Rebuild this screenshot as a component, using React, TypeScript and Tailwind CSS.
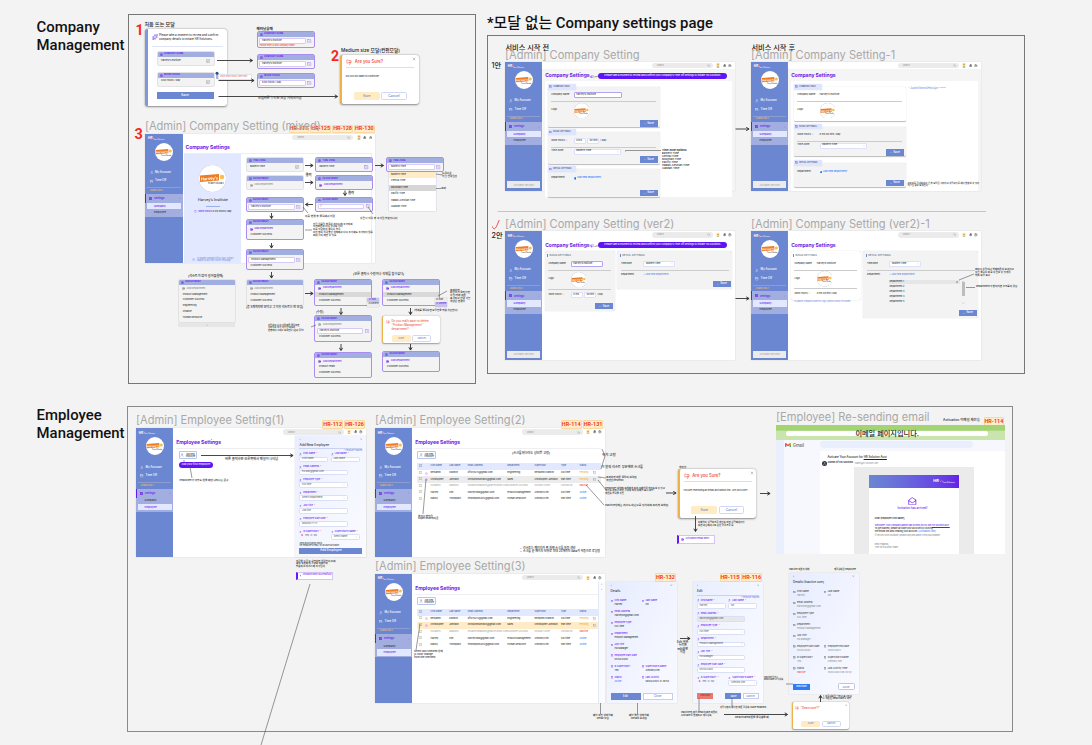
import React from "react";
import { User, Calendar, LayoutGrid, Search, Bell, Settings, Sparkles, Megaphone, X, ChevronDown, ChevronUp, Mail, MailOpen, Building2, SquareCheck, SquarePen, CirclePlus, Briefcase, Info, Check } from "lucide-react";

type Kids = { children?: React.ReactNode };

/* ---------- canvas primitives ---------- */

function Node({ at, children }: Kids & { at: string }) {
  return <div className={"absolute " + at}>{children}</div>;
}

function Note({ at, children }: Kids & { at: string }) {
  return <div className={"absolute whitespace-pre leading-[1.15] text-[#1d1d1d] " + at}>{children}</div>;
}

function ArtLabel({ at, children }: Kids & { at: string }) {
  return (
    <div className={"absolute whitespace-nowrap text-[11.1px] font-normal leading-[14px] text-[#a8a8a8] " + at}>
      {children}
    </div>
  );
}

function Chips({ at, ids }: { at: string; ids: string[] }) {
  return (
    <div className={"absolute flex gap-px whitespace-nowrap " + at}>
      {ids.map((id) => (
        <span
          key={id}
          className="flex h-[8.5px] w-[20.8px] items-center justify-center rounded-[1px] border border-[#f8d9a0] bg-[#ffecca] font-['Roboto',sans-serif] text-[5.4px] font-bold leading-none text-[#f03a26]"
        >
          {id}
        </span>
      ))}
    </div>
  );
}

/* ---------- shared pieces ---------- */

function Brand({ size }: { size: string }) {
  return (
    <svg viewBox="0 0 54 54" className={"shrink-0 " + size}>
      <circle cx="27" cy="27" r="27" fill="#fff" />
      <path d="M2 21 L40 18 L40 31 L2 34 Z" fill="#ee7c22" />
      <text x="4" y="31" fontSize="8" fontWeight="700" fill="#fff" transform="rotate(-4 4 31)" fontFamily="Inter">
        Harvey’s
      </text>
      <circle cx="46" cy="24" r="4.5" fill="#f8bd4a" />
      <text x="18" y="37.5" fontSize="5" fill="#444" fontFamily="Inter">
        Travel Studio
      </text>
    </svg>
  );
}

function Sidebar({ page, activate }: { page: "company" | "employee"; activate?: boolean }) {
  return (
    <div className="flex w-[37.4px] shrink-0 flex-col bg-[#6b87d1] text-white">
      <div className="flex h-[9px] items-start pl-[2.8px] pt-[3.4px] text-[3.2px] font-bold leading-none">
        HR<span className="text-[#ff5a4a]">⁄</span>
        <span className="pt-[1.6px] text-[1.6px] font-normal">Time Solutions</span>
      </div>
      <div className="flex h-[18px] justify-center">
        <Brand size="h-[18px] w-[18px]" />
      </div>
      <div className="flex h-[13.8px] items-end gap-[1.8px] pl-[4.4px] text-[2.8px] leading-[3.6px]">
        <User className="h-[3.4px] w-[3.4px]" /> My Account
      </div>
      <div className="flex h-[8.6px] items-end gap-[1.8px] pl-[4.4px] text-[2.8px] leading-[3.6px]">
        <Calendar className="h-[3.4px] w-[3.4px]" /> Time Off
      </div>
      <div className="mx-[2px] mt-[4.4px] h-[0.5px] bg-[#8d9dd0]" />
      <div className="h-[6px] pl-[4.6px] pt-[2.2px] text-[2.1px] leading-none text-[#f0bd58]">ADMIN ONLY</div>
      <div className="flex h-[23px] flex-col bg-[#a3aee0] text-[2.6px] leading-none text-[#333]">
        <div className="flex h-[9px] items-center gap-[1.8px] border-l-[1.5px] border-[#6a16f5] pl-[3px] font-semibold text-[#6a16f5]">
          <LayoutGrid className="h-[3px] w-[3px]" fill="#6a16f5" /> Settings
          <ChevronUp className="ml-auto mr-[2px] h-[2px] w-[2px]" />
        </div>
        <div
          className={
            page === "company"
              ? "mx-[1.6px] flex h-[6.2px] items-center bg-[#e1e8ff] pl-[7px] text-[#6a16f5]"
              : "mx-[1.6px] flex h-[6.2px] items-center pl-[7px]"
          }
        >
          Company
        </div>
        <div
          className={
            page === "employee"
              ? "mx-[1.6px] flex h-[6.2px] items-center bg-[#e1e8ff] pl-[7px] text-[#6a16f5]"
              : "mx-[1.6px] flex h-[6.2px] items-center pl-[7px]"
          }
        >
          Employee
        </div>
      </div>
      {activate && (
        <div className="mx-[2px] mb-[2.6px] mt-auto flex h-[6.8px] items-center justify-center bg-[#ebebeb] text-[2.6px] leading-none text-[#a5a5a5]">
          Activate Service
        </div>
      )}
    </div>
  );
}

function Screen({
  at,
  page,
  title,
  activate,
  tint,
  children,
}: Kids & { at: string; page: "company" | "employee"; title: string; activate?: boolean; tint?: boolean }) {
  return (
    <div className={"absolute flex h-[129px] w-[229.6px] shadow-[0_0_1px_#c4c4c4] " + at}>
      <Sidebar page={page} activate={activate} />
      <div className={"flex min-w-0 grow flex-col " + (tint ? "bg-[#f5f5f6]" : "bg-white")}>
        <div className="flex h-[7.6px] shrink-0 items-center justify-end bg-white pr-[2.6px] shadow-[0_0.3px_0.6px_#ddd]">
          <div className="flex h-[5.4px] w-[61px] items-center justify-between rounded-full bg-[#ebebeb] pl-[5px] pr-[3px] text-[2.1px] text-[#999]">
            Search <Search className="h-[3px] w-[3px]" />
          </div>
          <svg viewBox="0 0 8 10" className="ml-[3.6px] h-[4.6px] w-[4px]">
            <rect width="8" height="10" fill="#ffeccb" />
            <circle cx="4" cy="3.5" r="2.4" fill="#f0a93c" />
            <path d="M1 10 Q4 4.5 7 10Z" fill="#4aa8a0" />
          </svg>
          <Bell className="ml-[2.4px] h-[3.4px] w-[3.4px] text-[#555]" fill="#777" />
          <Settings className="ml-[2.2px] h-[3.6px] w-[3.6px] text-[#333]" />
        </div>
        <div className="h-[11.6px] shrink-0 whitespace-nowrap pl-[2.8px] pt-[4px] text-[5px] font-bold leading-[5.4px] tracking-[-0.03px] text-[#6a16e8]">
          {title}
        </div>
        {children}
      </div>
    </div>
  );
}

type Row = { text: string; kind?: "add" | "addGray" | "input" | "mark" | "plain" | "edit" };

function FieldCard({ at, label, rows, active }: { at: string; label: string; rows: Row[]; active?: boolean }) {
  return (
    <div
      className={
        "flex w-[58px] flex-col overflow-hidden rounded-[2px] border bg-[#f3f3f4] text-[2.4px] leading-none text-[#333] " +
        (active ? "border-[#a98df0] " : "border-[#e2e2e6] ") +
        at
      }
    >
      <div className="flex h-[5.2px] shrink-0 items-center gap-[1.4px] bg-[#a3aee0] pl-[2.4px] text-[2.3px] font-semibold text-[#6a16f5]">
        <Building2 className="h-[2.8px] w-[2.8px]" /> {label}
      </div>
      <div className="flex grow flex-col justify-around py-[0.8px]">
        {rows.map((r, i) => {
          if (r.kind === "input")
            return (
              <div key={i} className="flex items-center gap-[1.6px] px-[1.8px]">
                <span className="flex h-[5.8px] grow items-center rounded-[1px] border border-[#d6cbf7] bg-white pl-[1.6px]">
                  {r.text}
                </span>
                <SquareCheck className="h-[4.4px] w-[4.4px] text-[#8a5cf0]" />
              </div>
            );
          if (r.kind === "edit")
            return (
              <div key={i} className="flex items-center justify-between px-[3.4px]">
                {r.text}
                {active ? (
                  <SquareCheck className="h-[4.4px] w-[4.4px] text-[#7a3cf0]" />
                ) : (
                  <SquarePen className="h-[4px] w-[4px] text-[#777]" />
                )}
              </div>
            );
          if (r.kind === "add" || r.kind === "addGray")
            return (
              <div
                key={i}
                className={
                  "flex items-center gap-[1.8px] px-[3px] " + (r.kind === "add" ? "text-[#6a16f5]" : "text-[#888]")
                }
              >
                <CirclePlus className="h-[3px] w-[3px]" strokeWidth={4} /> {r.text}
              </div>
            );
          return (
            <div
              key={i}
              className={"flex items-center px-[4px] " + (r.kind === "mark" ? "h-[5px] bg-[#d9d9d9]" : "h-[3px]")}
            >
              {r.text}
            </div>
          );
        })}
      </div>
    </div>
  );
}

function Buttons({ small }: { small?: boolean }) {
  return (
    <div className={"mt-auto flex justify-center gap-[1.6px] " + (small ? "pb-[1.6px]" : "pb-[3.4px]")}>
      <span
        className={
          "flex items-center justify-center rounded-[1.6px] bg-[#ffebc4] leading-none text-[#7086bd] " +
          (small ? "h-[6.4px] w-[19px] text-[2.6px]" : "h-[7.8px] w-[25.6px] text-[3.4px]")
        }
      >
        Sure
      </span>
      <span
        className={
          "flex items-center justify-center rounded-[1.6px] border border-[#cfd8f4] bg-white leading-none text-[#6b87d1] " +
          (small ? "h-[6.4px] w-[19px] text-[2.6px]" : "h-[7.8px] w-[25.6px] text-[3.4px]")
        }
      >
        Cancel
      </span>
    </div>
  );
}

function ConfirmModal({ at, body }: { at: string; body: string }) {
  return (
    <div
      className={
        "absolute flex h-[48.6px] w-[78.6px] flex-col rounded-[3px] border-l-[2.4px] border-[#eeb24a] bg-white px-[4.4px] shadow-[0_0.6px_2px_#888] " +
        at
      }
    >
      <div className="flex h-[13.4px] shrink-0 items-center gap-[2.4px] border-b border-[#fbdda2] pt-[1.6px] text-[4.2px] font-semibold leading-none text-[#ee5b4c]">
        <Megaphone className="h-[6px] w-[6px] -scale-x-100" /> Are you Sure?
        <X className="-mr-[2px] -mt-[6px] ml-auto h-[4px] w-[4px] text-[#555]" />
      </div>
      <div className="-ml-[0.6px] whitespace-nowrap pt-[8px] text-[2.4px] leading-none text-[#333]">{body}</div>
      <Buttons />
    </div>
  );
}

/* ---------- company settings screens ---------- */

function SaveButton() {
  return (
    <span className="flex h-[6.6px] w-[18px] shrink-0 items-center justify-center gap-[1px] bg-[#6b87d1] text-[2.8px] leading-none text-white">
      <Check className="h-[2.6px] w-[2.6px]" /> Save
    </span>
  );
}

function Group({ size, label, children, white, save = true }: Kids & { size: string; label: string; white?: boolean; save?: boolean }) {
  return (
    <div
      className={
        "flex w-[112px] shrink-0 flex-col rounded-[1.6px] text-[2.4px] leading-none text-[#333] shadow-[0_0.3px_1px_#bbb] " +
        (white ? "bg-white " : "bg-[#f3f3f3] ") +
        size
      }
    >
      <div className="-mt-[2.6px] flex h-[5.4px] w-[28px] shrink-0 items-center gap-[1.2px] bg-[#dde5ff] pl-[1.8px] text-[2.1px] text-[#445] shadow-[0_0.2px_0.6px_#8ea2e0]">
        <Briefcase className="h-[2.8px] w-[2.8px] text-[#6a16f5]" /> {label}
      </div>
      {children}
      {save && (
        <div className="mt-auto flex justify-end pb-[1.2px] pr-[1.8px]">
          <SaveButton />
        </div>
      )}
    </div>
  );
}

function Input({ size, children }: Kids & { size: string }) {
  return (
    <span className={"flex h-[6px] items-center rounded-[1px] border border-[#dbe1f7] bg-white pl-[1.6px] " + size}>
      {children}
    </span>
  );
}

function LabelRow({ label, size, children }: Kids & { label: string; size: string }) {
  return (
    <div className={"flex shrink-0 items-center pl-[3.6px] " + size}>
      <span className="w-[22.4px] shrink-0">{label}</span>
      {children}
    </div>
  );
}

function CompanyOne({ at, after }: { at: string; after?: boolean }) {
  return (
    <Screen at={at} page="company" title="Company Settings" activate tint>
      <div className="ml-[2.4px] mr-[2.4px] flex grow flex-col rounded-[1px] bg-white pl-[2.8px] pt-[5.8px]">
        <Group size={after ? "h-[34px] mb-[5.8px]" : "h-[40.4px] mb-[4.8px]"} label="COMPANY INFO" white={after} save={!after}>
          <LabelRow label="Company Name" size="h-[11px]">
            {after ? <span>Harvey’s Institute</span> : <Input size="w-[48px] !border-[#b3a4f3]">Harvey’s Institute</Input>}
          </LabelRow>
          <div className="mx-[3.6px] h-[0.4px] shrink-0 bg-[#ccc]" />
          <LabelRow label="Logo" size="h-[19px]">
            <Brand size="h-[15.6px] w-[15.6px] drop-shadow-[0_0_0.5px_#999]" />
          </LabelRow>
        </Group>
        <Group size={after ? "h-[29px] mb-[7.2px]" : "h-[31.8px] mb-[5.2px]"} label="BASIC SETTINGS">
          <LabelRow label="Work Hours  ⓘ" size="h-[12px]">
            {after ? (
              <span>8 hrs 00 min / Day</span>
            ) : (
              <span className="flex items-center gap-[1.4px]">
                <Input size="w-[12px]">8 hrs</Input>
                <Input size="w-[12px]">00 min</Input>/ Day
              </span>
            )}
          </LabelRow>
          <div className="mx-[3.6px] h-[0.4px] shrink-0 bg-[#ccc]" />
          <LabelRow label="Time Zone" size={after ? "h-[7.6px]" : "h-[9px]"}>
            <Input size="w-[47.6px] justify-between pr-[1px]">
              Eastern Time <ChevronDown className="h-[2px] w-[2px]" />
            </Input>
          </LabelRow>
        </Group>
        <Group size={after ? "h-[24.6px]" : "h-[28.4px]"} label="DETAIL SETTINGS">
          <LabelRow label="Department" size="h-[12.8px]">
            <span className="flex items-center gap-[0.6px] text-[#1f78ff]">
              <CirclePlus className="h-[2.8px] w-[2.8px]" fill="#1f78ff" />
              Add new department
            </span>
          </LabelRow>
        </Group>
      </div>
    </Screen>
  );
}

function PanelHead({ children }: Kids) {
  return (
    <div className="flex h-[8px] shrink-0 items-center gap-[1.4px] pl-[2.6px] text-[2.6px] leading-none text-[#666]">
      <span className="h-[3.2px] w-[0.8px] bg-[#6b87d1]" />
      {children}
    </div>
  );
}

function CompanyTwo({ at, after }: { at: string; after?: boolean }) {
  return (
    <Screen at={at} page="company" title="Company Settings" activate>
      <div className="flex items-start gap-[2.6px] pl-[2.4px] pt-[0.8px] text-[2.3px] leading-none text-[#333]">
        <div
          className={
            "flex w-[70px] flex-col rounded-[2px] shadow-[0_0_1px_#bbb] " +
            (after ? "h-[48.4px] bg-white" : "h-[59.6px] bg-[#f3f3f3]")
          }
        >
          <PanelHead>BASIC SETTINGS</PanelHead>
          <LabelRow label="Company Name" size="h-[10.4px]">
            {after ? <span>Harvey’s Institute</span> : <Input size="w-[32px] !border-[#b3a4f3]">Harvey’s Institute</Input>}
          </LabelRow>
          <div className="mx-[3.6px] h-[0.4px] shrink-0 bg-[#ccc]" />
          <LabelRow label="Logo" size={after ? "h-[17.6px]" : "h-[19px]"}>
            <Brand size="h-[15.6px] w-[15.6px] drop-shadow-[0_0_0.5px_#999]" />
          </LabelRow>
          <div className="mx-[3.6px] h-[0.4px] shrink-0 bg-[#ccc]" />
          <LabelRow label="Work Hours ⓘ" size="h-[12px]">
            {after ? (
              <span>8 hrs 00 min / Day</span>
            ) : (
              <span className="flex items-center gap-[1.2px]">
                <Input size="w-[12px]">8 hrs</Input>
                <Input size="w-[12px]">00 min</Input>/ Day
              </span>
            )}
          </LabelRow>
          {!after && (
            <div className="mt-auto flex justify-end pb-[1.4px] pr-[1.6px]">
              <SaveButton />
            </div>
          )}
        </div>
        <div
          className={
            "flex w-[115px] flex-col rounded-[2px] bg-[#f3f3f3] shadow-[0_0_1px_#bbb] " +
            (after ? "h-[66.6px]" : "h-[37.6px]")
          }
        >
          <PanelHead>DETAIL SETTINGS</PanelHead>
          <LabelRow label="Timezone" size="h-[10.4px]">
            <Input size="w-[32px] justify-between pr-[1.4px]">
              Eastern Time <ChevronDown className="h-[2px] w-[2px]" />
            </Input>
          </LabelRow>
          <div className="mx-[3.6px] h-[0.4px] shrink-0 bg-[#ccc]" />
          <LabelRow label="Department" size="h-[10.6px]">
            <span className="text-[#5b86e8]">+ Add new department</span>
          </LabelRow>
          {after && (
            <div className="-mt-[0.8px] ml-[26px] flex w-[76px] justify-between">
              <div className="flex w-[71px] flex-col text-[2.3px]">
                <span className="flex h-[4.6px] items-center justify-between bg-[#e6e6e6] pr-[2px]">
                  Department 1 <SquarePen className="h-[2.4px] w-[2.4px]" />
                </span>
                <span className="flex h-[5px] items-center">Department 2</span>
                <span className="flex h-[5px] items-center">Department 3</span>
                <span className="flex h-[5px] items-center">Department 4</span>
                <span className="flex h-[5px] items-center">Department 5</span>
              </div>
              <div className="flex w-[3.4px] flex-col items-center">
                <ChevronUp className="h-[2.4px] w-[2.4px]" />
                <span className="mb-auto h-[13.4px] w-[3.4px] bg-[#bdbdbd]" />
                <ChevronDown className="h-[2.4px] w-[2.4px]" />
              </div>
            </div>
          )}
          <div className="mt-auto flex justify-end pb-[1.6px] pr-[1.6px]">
            <SaveButton />
          </div>
        </div>
      </div>
    </Screen>
  );
}

/* ---------- employee screens ---------- */

const people = [
  ["Benjamin", "Franklin", "bf1015272@gmail.com", "Engineering", "Benjamin Franklin", "Full time", "Pending"],
  ["Christopher", "Johnson", "chrisjohnson1984@gmail.com", "Sales", "Christopher Johnson", "Part time", "Pending"],
  ["Elizabeth", "Madison", "elizabethmadison@harveysinst.com", "Customer Success", "William Turner", "Contractor", "Inactive"],
  ["Harvey", "Kim", "harvey1988@gmail.com", "Product Management", "Anthony Kim", "Full time", "Active"],
  ["Nandy", "Thompson", "nthompson2012@gmail.com", "Human Resource", "Anthony Kim", "Part time", "Active"],
];

const cols = "grid grid-cols-[6px_5.6px_18.6px_18.6px_39.4px_27.4px_26.4px_18.6px_13px_6px] items-center pl-[2px]";

function AddButton() {
  return (
    <div className="flex h-[7.4px] w-[18.4px] items-center justify-center gap-[1.6px] rounded-[1px] border border-[#b9c6ec] text-[2px] leading-[2.2px] text-[#334]">
      <User className="h-[4px] w-[4px] text-[#6b87d1]" />
      <span>
        Add New
        <br />
        Employee
      </span>
    </div>
  );
}

function EmployeeTable({ cream }: { cream?: boolean }) {
  return (
    <div className="ml-[2.4px] mr-[4px] mt-[1px] flex flex-col border-t border-[#f0f0f4] pt-[2px] text-[2.3px] leading-none text-[#333]">
      <div className="ml-[2.4px]">
        <AddButton />
      </div>
      <div className={cols + " ml-[2.2px] mt-[4px] h-[7px] bg-[#e1e8ff] text-[2.2px] text-[#3b5aa8]"}>
        <span className="text-[3px]">□</span>
        <span />
        <span>First Name</span>
        <span>Last Name</span>
        <span>Email Address</span>
        <span>Department</span>
        <span>Supervisor</span>
        <span>Type</span>
        <span>Status</span>
      </div>
      {people.map((p, i) => (
        <div
          key={p[0]}
          className={
            cols +
            " ml-[2.2px] h-[6.6px] whitespace-nowrap " +
            (i === 1 ? (cream ? "bg-[#ffebc6]" : "bg-[#ececec]") : i === 2 ? "text-[#aaa]" : "")
          }
        >
          <span className="text-[3px] text-[#777]">□</span>
          {i < 2 ? <Bell className="h-[3px] w-[3px] text-[#a347f5]" /> : <span />}
          <span>{p[0]}</span>
          <span>{p[1]}</span>
          <span>{p[2]}</span>
          <span>{p[3]}</span>
          <span>{p[4]}</span>
          <span>{p[5]}</span>
          <span className={i < 2 ? "text-[#f0b040]" : i === 2 ? "text-[#f04438]" : "text-[#1f78ff]"}>{p[6]}</span>
          {i < 2 && <Mail className="h-[3.4px] w-[3.4px] text-[#6b87d1]" />}
        </div>
      ))}
    </div>
  );
}

function FormField({ label, value, wide, select, off }: { label: string; value: string; wide?: boolean; select?: boolean; off?: boolean }) {
  return (
    <div className={"flex h-[12.9px] flex-col text-[2.3px] leading-none " + (wide ? "w-[48.6px]" : "w-[29px]")}>
      <span className="flex h-[4.4px] items-center gap-[1.2px] whitespace-nowrap text-[#6a16f5]">
        <User className="h-[2.6px] w-[2.6px]" /> {label} <span className="text-[#f03a26]">*</span>
      </span>
      <span
        className={
          "flex h-[5.8px] items-center justify-between whitespace-nowrap rounded-[1.4px] border border-[#d9dff5] px-[1.6px] text-[#666] " +
          (off ? "bg-[#e8e8ea]" : "bg-white")
        }
      >
        {value} {select && <ChevronDown className="h-[2.2px] w-[2.2px]" />}
      </span>
    </div>
  );
}

function EmployeeForm({ title, v, children }: Kids & { title: string; v: string[] }) {
  return (
    <div className="flex h-full w-full flex-col bg-linear-to-br from-[#e9eeff] via-[#f3f6ff] to-[#fbfbff] pl-[4.2px] pr-[3.4px] shadow-[0_0_1px_#c4c4d4]">
      <div className="flex h-[7px] shrink-0 items-center justify-between text-[2.6px] leading-none text-[#555]">
        <span>‹</span>
        <X className="h-[2.6px] w-[2.6px]" />
      </div>
      <div className="h-[6.6px] shrink-0 border-b border-[#c8d2ee] pt-[0.4px] text-[3.2px] leading-[4px] text-[#333]">
        {title}
      </div>
      <div className="h-[3px] shrink-0 text-right text-[1.9px] leading-[2.4px] text-[#5b7fe0]">
        <span className="text-[#f03a26]">*</span> Fields are required
      </div>
      <div className="flex gap-[2.6px]">
        <FormField label="First Name" value={v[0]} />
        <FormField label="Last Name" value={v[1]} />
      </div>
      <FormField wide label="Email Address" value={v[2]} off={title === "Edit"} />
      <FormField wide label="Employee Type" value={v[3]} select />
      <FormField wide label="Department" value={v[4]} select />
      <FormField wide label="Job Title" value={v[5]} />
      <FormField wide label="Employee Start Date" value={v[6]} />
      <div className="flex gap-[2.6px]">
        <div className="flex w-[29px] flex-col text-[2.3px] leading-none">
          <span className="flex h-[4.4px] items-center gap-[1.2px] text-[#6a16f5]">
            <User className="h-[2.6px] w-[2.6px]" /> Is Supervisor? <span className="text-[#f03a26]">*</span>
          </span>
          <span className="flex h-[4.6px] items-center gap-[1.4px] pl-[1.6px] text-[#666]">
            <span className="text-[#f04438]">◉</span>Yes <span>○</span>No
          </span>
        </div>
        <FormField label="Supervisor’s Name" value={v[7]} select />
      </div>
      {children}
    </div>
  );
}

function Details({ title, gray, rows, pitch, children }: Kids & { title: string; gray?: boolean; rows: string[][]; pitch: string }) {
  return (
    <div className="flex h-full w-full flex-col bg-linear-to-br from-[#e6ecff] via-[#f1f4ff] to-[#fafaff] px-[4px] shadow-[0_0_1px_#c4c4d4]">
      <div className="flex h-[6px] shrink-0 items-center justify-between text-[2.6px] leading-none text-[#555]">
        <span>‹</span>
        <X className="h-[2.6px] w-[2.6px]" />
      </div>
      <div className="h-[11px] shrink-0 pt-[0.6px] text-[3px] leading-[4px] text-[#333]">{title}</div>
      {rows.map((r) => (
        <div key={r[0]} className={"flex shrink-0 whitespace-nowrap text-[2.3px] leading-none " + pitch}>
          {[r.slice(0, 2), r.slice(2, 4)].map(
            (c, i) =>
              c[0] && (
                <div key={i} className="flex w-[32.4px] flex-col">
                  <span className={"flex h-[4.2px] items-center gap-[1.4px] " + (gray ? "text-[#444]" : "text-[#6a16f5]")}>
                    <Briefcase className="h-[2.6px] w-[2.6px]" /> {c[0]}
                  </span>
                  <span
                    className={
                      "flex h-[4.4px] items-center pl-[4px] " +
                      (c[1] === "Inactive" ? "text-[#f04438]" : c[1] === "Active" ? "text-[#1f78ff]" : gray ? "text-[#909090]" : "text-[#333]")
                    }
                  >
                    {c[1]}
                  </span>
                </div>
              ),
          )}
        </div>
      ))}
      {children}
    </div>
  );
}

function GmailBoard() {
  return (
    <div className="flex h-[129px] w-[229px] flex-col bg-[#f6f8fd]">
      <div className="flex h-[14.4px] shrink-0 items-center justify-center bg-linear-to-b from-[#a4d373] from-35% to-[#c9e5ad] to-40%">
        <div className="mr-[6px] mt-[1.6px] flex h-[5px] w-[201.5px] items-center justify-center rounded-full bg-white text-[7.2px] leading-none text-[#222]">
          이메일 페이지입니다.
        </div>
      </div>
      <div className="flex min-h-0 grow">
        <div className="w-[8.3px] shrink-0 bg-[#e9effc]" />
        <div className="flex w-[36px] shrink-0 items-start gap-[1.4px] pl-[1.4px] pt-[3px] text-[4.2px] leading-[5px] text-[#666]">
          <svg viewBox="0 0 14 11" className="h-[4.6px] w-[6px]">
            <path d="M0 1v10h3V4z" fill="#4285f4" />
            <path d="M14 1v10h-3V4z" fill="#34a853" />
            <path d="M0 1l2-1 5 4 5-4 2 1v2L7 8 0 3z" fill="#ea4335" />
            <path d="M11 1.5L12.5 0L14 1.5V3.5L11 5.5z" fill="#fbbc04" />
          </svg>
          Gmail
        </div>
        <div className="flex grow flex-col">
          <div className="mt-[1.4px] h-[7.4px] w-[153.5px] shrink-0 rounded-full bg-[#e9effc]" />
          <div className="mt-[2.6px] flex min-h-0 grow flex-col bg-white">
            <div className="pl-[7.4px] pt-[5px] text-[2.9px] leading-[3.4px] text-[#222]">
              Activate Your Account for <span className="underline">HR Solution Acct</span>
            </div>
            <div className="flex h-[8px] shrink-0 items-center gap-[0.8px] pl-[2.4px] text-[2.5px] font-semibold leading-none text-[#222]">
              <span className="flex h-[4.4px] w-[4.4px] items-center justify-center rounded-full bg-[#334]">
                <User className="h-[3px] w-[3px] text-white" />
              </span>
              Admin of HR Solution <span className="text-[2px] font-normal text-[#888]">&lt;admin@hr-solution.com&gt;</span>
            </div>
            <div className="ml-[34.2px] flex min-h-0 w-[119.4px] grow justify-center bg-[#ebebeb] pt-[7.8px]">
              <div className="flex w-[90px] flex-col bg-white">
                <div className="flex h-[12.4px] shrink-0 items-center justify-end bg-linear-to-r from-[#6b87d1] to-[#6620e8] pr-[4px] text-[4px] font-bold leading-none text-white">
                  HR<span className="text-[#ff6a4a]">✓</span>
                  <span className="mt-[3px] text-[1.8px] font-normal">Time Solutions</span>
                </div>
                <div className="flex h-[22.6px] shrink-0 flex-col items-center justify-end gap-[1.4px] pr-[3px] text-[2.9px] leading-[3.4px] text-[#6a16f5]">
                  <MailOpen className="h-[8.6px] w-[8.6px]" />
                  Invitation has arrived!
                </div>
                <div className="flex flex-col whitespace-nowrap pl-[6px] pt-[7.2px] text-[2.2px] leading-[3.3px] text-[#222]">
                  <b className="mb-[3.2px] font-semibold">Dear [Employee First Name],</b>
                  <span className="text-[#6a16f5]">
                    Welcome! Your company admin has invited you to use <u>HR Solution acct.</u>
                  </span>
                  <span>To get started, please activate your account by clicking</span>
                  <span>
                    the below link and creating your account: <span className="text-[#1f78ff]">[Activation Link]</span>
                  </span>
                  <span className="text-[2px] text-[#888]">If the link is not clickable, please copy and paste it into your browser.</span>
                  <span className="mt-[5.6px] text-[#888]">Best regards,</span>
                  <span className="text-[#888]">The HR Solution Team</span>
                </div>
              </div>
            </div>
          </div>
        </div>
      </div>
    </div>
  );
}

/* ---------- connectors ---------- */

const arrows = [
  "M217 60.5H252", "M218.5 80.5H253.5", "M218.5 96.5H337",
  "M305 165.5H312.5", "M305 182.5H312.5", "M375 165.5H383", "M345 190.5V195", "M313 204.5H306",
  "M271.5 213V218", "M271.5 243V247.5", "M271.5 272V277.5", "M305 293.5H312.5",
  "M341 308V314", "M341 344V350", "M410.5 308V314", "M410.5 344V349.5",
  "M735.5 129H748.5", "M735.5 298.5H748.5", "M201 455.5H292.5", "M666 493H675.5", "M760 493.5H769.5",
  "M695.5 516V531", "M680 638.5H689.5", "M724 714.5H787", "M820.5 702V696",
];
const leaders = [
  "M303 207L308 213", "M305 230H312", "M436 174L443 175", "M436 188.5H441", "M368 207L373 214", "M438 296L447 291", "M311 327L316 325",
  "M625.5 151.5V150.5H661", "M310 584L261 745", "M190 467L192 478", "M184 462V460", "M426 479L423 514", "M602 449L605 456L601 469",
  "M598 477L606 478", "M598 480L606 490", "M586 485L604 505", "M420 624L416 650", "M600.5 703V714", "M637.5 703V714", "M699 698V712", "M732 698V708",
  "M959 280L974 274", "M966 287.5H975", "M786 684L793 684", "M594.5 77L599 76", "M594.5 246.5L599 245.5",
];

function Connectors() {
  return (
    <svg className="pointer-events-none absolute inset-0 h-full w-full" viewBox="0 0 1092 745">
      <defs>
        <marker id="head" viewBox="0 0 6 6" refX="4" refY="3" markerWidth="5" markerHeight="5" orient="auto">
          <path d="M1 0.8L4.8 3L1 5.2" fill="none" stroke="#222" strokeWidth="1.2" />
        </marker>
      </defs>
      {arrows.map((d) => (
        <path key={d} d={d} stroke="#333" strokeWidth="0.9" fill="none" markerEnd="url(#head)" />
      ))}
      {leaders.map((d) => (
        <path key={d} d={d} stroke="#555" strokeWidth="0.6" fill="none" />
      ))}
      <path d="M217 73V79" stroke="#2c4a9c" strokeWidth="0.8" />
      <circle cx="217" cy="73.3" r="1.5" fill="#2c4a9c" />
      <path d="M492.500 226.500C493 229 494.500 229.500 495.500 228C497 226 498 222.500 499.300 220" stroke="#f03a3a" strokeWidth="0.9" fill="none" />
      <path d="M497.5 211.5H986" stroke="#c6c6c6" strokeWidth="1" />
    </svg>
  );
}

const zones = ["Eastern Time", "Central Time", "Mountain Time", "Pacific Time", "Hawaii-Aleutian Time", "Alaskan Time"];

function DropList({ items, at }: { items: string[]; at: string }) {
  return (
    <div className={"absolute flex w-[47.6px] flex-col bg-white text-[2.4px] leading-none text-[#333] shadow-[0_0_1px_#8d9bd0] " + at}>
      {items.map((z, i) => (
        <span
          key={z}
          className={
            "flex h-[6.5px] items-center pl-[2.4px] " + (i === 0 ? "bg-[#ffebc6]" : i === 2 ? "bg-[#d6d6d6]" : "")
          }
        >
          {z}
        </span>
      ))}
    </div>
  );
}

function SetupHint({ at }: { at: string }) {
  return (
    <Node at={"flex h-[6.2px] w-[128.6px] items-center justify-center whitespace-nowrap rounded-full bg-[#5f14f5] text-[2.4px] leading-none text-white " + at}>
      Please take a moment to review and confirm your company’s Time Off settings to initiate HR Solutions
    </Node>
  );
}

const TZ = "TIME ZONE";
const DP = "DEPARTMENT";
const add: Row = { text: "Add Department", kind: "add" };
const addGray: Row = { text: "Add Department", kind: "addGray" };
const cs: Row = { text: "Customer Success" };

export default function App() {
  return (
    <main className="relative h-[745px] w-[1092px] overflow-hidden bg-[#f3f3f3] font-['Inter','Noto_Sans_CJK_KR',sans-serif] font-medium text-[#333]">
      {/* section frames */}
      <Node at="left-[128px] top-[14px] h-[370px] w-[348px] border border-[#777]" />
      <Node at="left-[487px] top-[35px] h-[339px] w-[538px] border border-[#777]" />
      <Node at="left-[127px] top-[406px] h-[326px] w-[886px] border border-[#8a8a8a]" />

      <h1 className="absolute left-[36.6px] top-[19px] font-['Roboto',sans-serif] text-[14.9px] font-medium leading-[17.5px] text-[#111]">
        Company
        <br />
        Management
      </h1>
      <h1 className="absolute left-[36.6px] top-[407px] font-['Roboto',sans-serif] text-[14.9px] font-medium leading-[17.5px] text-[#111]">
        Employee
        <br />
        Management
      </h1>
      <h2 className="absolute left-[487px] top-[14px] whitespace-nowrap font-['Roboto','Noto_Sans_CJK_KR',sans-serif] text-[14.9px] font-medium leading-[18px] text-[#111]">
        *모달 없는 Company settings page
      </h2>

      {/* first-run modal */}
      <Note at="left-[135.6px] top-[22px] text-[14px] font-bold !text-[#f5281c] font-['Roboto',sans-serif]">1</Note>
      <Note at="left-[144.5px] top-[22px] text-[5px]">처음 뜨는 모달</Note>
      <div className="absolute left-[144.5px] top-[29px] flex h-[76.5px] w-[82px] flex-col rounded-[3px] border-l-[3px] border-[#7f98dd] bg-white px-[4px] shadow-[0_0.6px_2px_#888]">
        <div className="flex h-[17.5px] shrink-0 items-center gap-[1.5px] whitespace-nowrap border-b border-[#dfe5f7] text-[2.8px] leading-[4.5px]">
          <Sparkles className="h-[6px] w-[6px] text-[#6a30e8]" />
          <span>
            Please take a moment to review and confirm
            <br />
            company details to initiate HR Solutions.
          </span>
        </div>
        <div className="flex flex-col gap-[5.6px] pl-[5px] pt-[4.5px]">
          <FieldCard at="h-[15px]" label="COMPANY NAME" rows={[{ text: "Harvey’s Institute", kind: "edit" }]} />
          <FieldCard at="h-[15px]" label="WORK HOURS" rows={[{ text: "8.00 Hours / Day", kind: "edit" }]} />
          <div className="flex h-[7px] w-[57px] items-center justify-center bg-[#6b87d1] text-[3.4px] leading-none text-white">Save</div>
        </div>
      </div>
      <Node at="left-[218px] top-[73.5px] flex h-[6.5px] w-[34px] items-center whitespace-nowrap border border-[#e2e2ea] bg-white pl-[1px] text-[2.1px] leading-none text-[#ee6a5c]">
        Click Work Hours, then edit
      </Node>
      <Note at="left-[256.5px] top-[26.8px] text-[3.5px] font-bold">에러났을때</Note>
      <FieldCard active at="absolute left-[256.5px] top-[31px] h-[17px] pb-[2px]" label="COMPANY NAME" rows={[{ text: "Harvey’s Institute", kind: "input" }]} />
      <Note at="left-[259.5px] top-[44.8px] text-[2.1px] !text-[#ee4438]">Please enter a valid company name</Note>
      <FieldCard active at="absolute left-[256.5px] top-[54px] h-[15px]" label="COMPANY NAME" rows={[{ text: "Harvey’s Institute", kind: "input" }]} />
      <FieldCard active at="absolute left-[256.5px] top-[73px] h-[15px]" label="WORK HOURS" rows={[{ text: "8.00     Hours / Day", kind: "input" }]} />
      <Note at="left-[258px] top-[97px] text-[3.2px]">컨펌버튼 누르면 저장 거쳐서이동</Note>

      <Note at="left-[331px] top-[47.5px] text-[14px] font-bold !text-[#f5281c] font-['Roboto',sans-serif]">2</Note>
      <Note at="left-[341px] top-[47.6px] text-[4.7px]">Medium size 모달(컨펌모달)</Note>
      <ConfirmModal at="left-[340px] top-[55px]" body="Do you still want to continue?" />

      {/* mixed company setting */}
      <Note at="left-[134.5px] top-[127px] text-[14.5px] font-bold !text-[#f5281c] font-['Roboto',sans-serif]">3</Note>
      <Screen at="left-[145.3px] top-[133.7px]" page="company" title="Company Settings">
        <div className="ml-[1.8px] mr-[2.6px] flex grow border-t border-[#eee]">
          <div className="flex w-[57px] flex-col items-center whitespace-nowrap bg-[#e1e8ff] pt-[11px] text-[2.2px] leading-none">
            <Brand size="h-[27px] w-[27px] drop-shadow-[0_0.5px_0.5px_#999]" />
            <span className="pt-[6px] text-[3.6px] leading-[5px]">Harvey’s Institute</span>
            <span className="mt-[3px] h-[0.5px] w-[14px] bg-[#9db0ea]" />
            <span className="pt-[4.5px] text-[2.5px]">
              <span className="text-[#6a16f5]">◷ Work hours</span> 8.00 hours/ day
            </span>
            <span className="mt-auto flex items-center gap-[1.5px] pb-[1px] text-[1.9px] leading-[2.3px] text-[#7b93dd]">
              <Info className="h-[3px] w-[3px]" />
              <span>
                To update company info or logo, contact
                <br />
                support at any time via the Help page
              </span>
            </span>
          </div>
          <div className="grow border-r border-[#eee]" />
        </div>
      </Screen>
      <Chips at="left-[288.5px] top-[124.8px]" ids={["HR-111", "HR-125", "HR-128", "HR-130"]} />
      <ArtLabel at="left-[145px] top-[118.5px] tracking-[-0.05px]">[Admin] Company Setting (mixed)</ArtLabel>

      <FieldCard at="absolute left-[245.5px] top-[157.3px] h-[15px]" label={TZ} rows={[{ text: "Eastern Time", kind: "edit" }]} />
      <FieldCard at="absolute left-[245.5px] top-[175.3px] h-[15px]" label={DP} rows={[addGray]} />
      <FieldCard active at="absolute left-[245.5px] top-[197px] h-[15px]" label={DP} rows={[{ text: "Harvey’s Institute", kind: "input" }]} />
      <FieldCard active at="absolute left-[245.5px] top-[219px] h-[21px]" label={DP} rows={[add, cs]} />
      <FieldCard active at="absolute left-[245.5px] top-[249px] h-[21px]" label={DP} rows={[{ text: "Product Management", kind: "input" }, cs]} />
      <FieldCard at="absolute left-[245.5px] top-[279px] h-[26.5px]" label={DP} rows={[addGray, { text: "Product Management" }, cs]} />
      <FieldCard active at="absolute left-[315px] top-[157.3px] h-[15px]" label={TZ} rows={[{ text: "Eastern Time", kind: "edit" }]} />
      <FieldCard active at="absolute left-[315px] top-[175.3px] h-[15px]" label={DP} rows={[add]} />
      <FieldCard active at="absolute left-[315px] top-[196.5px] h-[15px]" label={DP} rows={[{ text: "|", kind: "input" }]} />
      <FieldCard active at="absolute left-[385.5px] top-[157.3px] h-[15px]" label={TZ} rows={[{ text: "Eastern Time", kind: "input" }]} />
      <DropList at="left-[388.5px] top-[171.5px]" items={zones} />
      <Note at="left-[442px] top-[172.3px] text-[2.6px]">{"드롭다운\n가장 선택된것"}</Note>
      <Note at="left-[441px] top-[186.8px] text-[2.8px]">호버</Note>
      <Note at="left-[305.5px] top-[174px] text-[3.3px] font-bold">클릭</Note>
      <Note at="left-[348px] top-[191.5px] text-[3.3px] font-bold">클릭</Note>
      <Note at="left-[305px] top-[215px] text-[2.7px]">이름 변경 후 클릭해서 저장</Note>
      <Note at="left-[360px] top-[216.6px] text-[2.7px]">수정시 입력 후 추가된 부분입니다</Note>
      <Note at="left-[313px] top-[223.5px] text-[2.5px]">{"저장 완료된 항목은 리스트에 추가되며\n추가버튼이 다시 활성화 된다\n이름 입력없이 클릭시 무시\n이전 항목 입력중인 상태에서 다시 추가해도 추가되지 않음\n최대 길이 제한 수 있음"}</Note>
      <Note at="left-[188px] top-[274.5px] text-[3.1px]">(리스트가 많이 길어졌을때)</Note>
      <FieldCard at="absolute left-[177.7px] top-[279px] h-[44px]" label={DP} rows={[addGray, { text: "Product Management" }, cs, { text: "Engineering" }, { text: "Finance" }, { text: "Human Resource" }]} />
      <Node at="left-[178px] top-[323px] flex h-[3.6px] w-[57.4px] items-center justify-center bg-[#e6e6e6]">
        <ChevronDown className="h-[2.4px] w-[2.4px]" />
      </Node>
      <Note at="left-[246px] top-[306px] text-[2.9px]">(총 5개까지만 보이고 그 이후 리스트는 안 보임)</Note>
      <Note at="left-[268px] top-[324.5px] text-[2.3px]">{"수정하고 나서 수정버튼 클릭되면\n사라지고 추가 수정한 내용이\n반영되어 그대로 보여진다 (순서 동일)"}</Note>
      <Note at="left-[353px] top-[272.5px] text-[3.1px]">(오른 클릭시 수정이나 삭제를 할수있다)</Note>

      <FieldCard active at="absolute left-[314px] top-[278.8px] h-[27px]" label={DP} rows={[add, { text: "Product Management", kind: "mark" }, cs]} />
      <FieldCard active at="absolute left-[382px] top-[278.8px] h-[27px]" label={DP} rows={[add, { text: "Product Management", kind: "mark" }, cs]} />
      <Node at="left-[367px] top-[297.5px] flex w-[12px] flex-col bg-[#ededed] text-[2.4px] leading-none shadow-[0_0_1px_#aaa]">
        <span className="flex h-[4.5px] items-center bg-[#c9c2ee] pl-[1.5px] text-[#6a16f5]">▣ Edit</span>
        <span className="flex h-[4.5px] items-center pl-[1.5px]">▢ Delete</span>
      </Node>
      <Node at="left-[434.5px] top-[297.5px] flex w-[12px] flex-col bg-[#ededed] text-[2.4px] leading-none shadow-[0_0_1px_#aaa]">
        <span className="flex h-[4.5px] items-center pl-[1.5px]">▢ Edit</span>
        <span className="flex h-[4.5px] items-center bg-[#c9c2ee] pl-[1.5px] text-[#6a16f5]">▣ Delete</span>
      </Node>
      <Note at="left-[450px] top-[288.5px] text-[2.6px]">{"호버하면\n마우스가 올라가면\n수정/삭제 버튼\n표시되고 선택 가능\n색상은 변경됨"}</Note>
      <Note at="left-[316px] top-[310.5px] text-[2.9px]">(수정)</Note>
      <Note at="left-[414px] top-[310.3px] text-[2.5px]">(삭제를 클릭하면 모달창을 띄워 확인한다)</Note>
      <FieldCard active at="absolute left-[314px] top-[315.3px] h-[26.5px]" label={DP} rows={[addGray, { text: "Harvey’s Institute", kind: "input" }, cs]} />
      <FieldCard active at="absolute left-[314px] top-[351.8px] h-[26.5px]" label={DP} rows={[add, { text: "Product Team" }, cs]} />
      <FieldCard active at="absolute left-[382px] top-[351px] h-[21px]" label={DP} rows={[add, cs]} />
      <div className="absolute left-[382px] top-[315.7px] flex h-[27.5px] w-[57.8px] flex-col rounded-[2px] border-l-[1.6px] border-[#eeb24a] bg-white px-[2.6px] pt-[4.4px] shadow-[0_0.4px_1.6px_#999]">
        <div className="flex gap-[2px] whitespace-nowrap text-[2.8px] leading-[3.9px] text-[#ee5b4c]">
          <Megaphone className="h-[4px] w-[4px] -scale-x-100" />
          <span>
            Do you really want to delete
            <br />
            “Product Management”
            <br />
            department?
          </span>
        </div>
        <Buttons small />
      </div>

      {/* company settings without modal */}
      <ArtLabel at="left-[505px] top-[47.5px]">[Admin] Company Setting</ArtLabel>
      <ArtLabel at="left-[751px] top-[47.5px]">[Admin] Company Setting-1</ArtLabel>
      <ArtLabel at="left-[505px] top-[216.6px]">[Admin] Company Setting (ver2)</ArtLabel>
      <ArtLabel at="left-[751px] top-[216.6px]">[Admin] Company Setting (ver2)-1</ArtLabel>
      <Note at="left-[505.5px] top-[43.6px] text-[7.2px]">서비스 시작 전</Note>
      <Note at="left-[751.5px] top-[43.6px] text-[7.2px]">서비스 시작 후</Note>
      <Note at="left-[491.5px] top-[61.8px] text-[7.2px]">1안</Note>
      <Note at="left-[491.5px] top-[231.5px] text-[7.2px]">2안</Note>
      <CompanyOne at="left-[505px] top-[61.8px]" />
      <CompanyOne at="left-[751px] top-[61.8px]" after />
      <CompanyTwo at="left-[505px] top-[231.2px]" />
      <CompanyTwo at="left-[751px] top-[231.2px]" after />
      <SetupHint at="left-[598px] top-[72.7px]" />
      <SetupHint at="left-[598px] top-[242px]" />
      <Node at="left-[590px] top-[74.5px]">
        <Megaphone className="h-[3.8px] w-[3.8px] text-[#6a16f5]" />
      </Node>
      <Node at="left-[590px] top-[243.8px]">
        <Megaphone className="h-[3.8px] w-[3.8px] text-[#6a16f5]" />
      </Node>
      <Note at="left-[662px] top-[148.6px] text-[2.7px]">
        <b>Time Zone options</b>
        {"\nEastern Time\nCentral Time\nMountain Time\nPacific Time\nHawaii-Aleutian Time\nAlaskan Time"}
      </Note>
      <Note at="left-[908px] top-[86.5px] text-[1.7px] !text-[#7b93dd]">{"ⓘ  To update Company Name or Logo, contact\n     support or refer to the Help page"}</Note>
      <Note at="left-[907.5px] top-[182.5px] text-[2.3px]">{"서비스를 활성화하고 난 후 모달은 사라지고 수정하기를 해야 변경할 수 있다.\n저장된 값이 보여진다."}</Note>
      <Note at="left-[791.5px] top-[300px] text-[1.95px] !text-[#7b93dd]">ⓘ To update Company Name or Logo, please contact the admin</Note>
      <Note at="left-[975px] top-[269px] text-[2.5px]">{"호버시 수정이나 삭제버튼이 보여지고\n수정 클릭시 바로 수정할 수 있게됨\n삭제 모달 표시"}</Note>
      <Note at="left-[976px] top-[285.8px] text-[2.5px]">department가 많아지면 스크롤이 생김</Note>

      {/* employee settings */}
      <ArtLabel at="left-[136px] top-[413px]">[Admin] Employee Setting(1)</ArtLabel>
      <ArtLabel at="left-[375px] top-[413px]">[Admin] Employee Setting(2)</ArtLabel>
      <ArtLabel at="left-[375px] top-[559px]">[Admin] Employee Setting(3)</ArtLabel>
      <ArtLabel at="left-[776px] top-[410px]">[Employee] Re-sending email</ArtLabel>
      <Screen at="left-[136px] top-[428.3px]" page="employee" title="Employee Settings">
        <div className="ml-[2.6px] mt-[1px] w-[119px] border-t border-[#eee] pl-[2.6px] pt-[2px]">
          <AddButton />
          <div className="mt-[3.2px] flex h-[6px] w-[34.5px] items-center justify-center rounded-full bg-[#5f14f5] text-[2.5px] leading-none text-white">
            Add your first employee
          </div>
        </div>
      </Screen>
      <Note at="left-[225px] top-[457.5px] text-[3.2px]">버튼 클릭하면 오른쪽에서 패널이 나타남</Note>
      <Note at="left-[179.5px] top-[478.5px] text-[2.6px]">Employee가 아무도 없을 때만 나타나는 문구</Note>
      <Node at="left-[295.3px] top-[435.7px] h-[121.5px] w-[70.4px]">
        <EmployeeForm title="Add New Employee" v={["First name", "Last name", "ex) abc@gmail.com", "Full time", "Select Department", "Job title", "MM/DD/YYYY", "Select name"]}>
          <div className="-mt-[1px] whitespace-nowrap text-[1.9px] leading-[2.4px] text-[#333]">
            Send an activation link to
            <br />
            the employee’s email, for account activation
          </div>
          <div className="mt-[1.4px] flex h-[6px] items-center justify-center bg-[#6b87d1] text-[3.2px] leading-none text-white">
            Add Employee
          </div>
        </EmployeeForm>
      </Node>
      <Chips at="left-[322.3px] top-[420.3px]" ids={["HR-112", "HR-126"]} />
      <Note at="left-[296px] top-[560.5px] text-[2.5px]">{"저장을 누르고 성공하면 알림창이 뜨며\n해당 직원에게 활성화 이메일이\n발송되고 리스트에 추가된다"}</Note>
      <Node at="left-[295.5px] top-[571.5px] flex h-[8.2px] w-[37.5px] items-center gap-[1.6px] whitespace-nowrap border border-l-2 border-[#d3c4f6] border-l-[#6a16f5] bg-white pl-[2px] text-[2.2px] leading-none text-[#6a16f5]">
        <Info className="h-[3px] w-[3px]" fill="#b79af8" /> Invitation sent successfully!
      </Node>

      <Screen at="left-[375px] top-[428.3px]" page="employee" title="Employee Settings">
        <EmployeeTable />
      </Screen>
      <Note at="left-[512px] top-[452px] text-[3.1px]">(스크롤되더라도 상단은 고정)</Note>
      <Note at="left-[602px] top-[453px] text-[3.5px]">위치 고정</Note>
      <Note at="left-[601.5px] top-[465.5px] text-[3.2px]">이 밑의 리스트 부분에만 스크롤</Note>
      <Note at="left-[606px] top-[476px] text-[2.6px]">{"호버하면 버튼 툴팁이 보여짐\n재전송(resend)"}</Note>
      <Note at="left-[605px] top-[487.5px] text-[2.4px]">{"Pending인 상태의 직원에게 초대 이메일을 재전송할 수 있고\n재전송 아이콘 버튼 활성화 되어 이메일 표시 모달\n재전송 클릭후 확인"}</Note>
      <Note at="left-[605px] top-[503.8px] text-[2.7px]">Inactive상태는 리스트 하단으로 위치하며 흐리게 보여짐</Note>
      <Note at="left-[418px] top-[514.5px] text-[2.6px]">{"체크시 펜딩된\nsupervisor아이콘"}</Note>
      <Note at="left-[520px] top-[546.5px] text-[2.9px]">{"–  리스트는 페이지가 꽉 차면 스크롤 자동 생성\n–  스크롤 끝 페이지 단위로 최대 20개까지 data가 자동으로 로딩됨"}</Note>
      <Chips at="left-[560.8px] top-[420.3px]" ids={["HR-114", "HR-131"]} />
      <Note at="left-[679px] top-[465.5px] text-[2.7px]">재전송</Note>
      <ConfirmModal at="left-[677.5px] top-[469px]" body="You are resending an email activation link. Are you sure?" />
      <Note at="left-[698px] top-[521.8px] text-[2.4px]">{"이메일이 성공적으로 재전송 되면 성공메세지가\n화면 하단에서 2초 동안 알림으로 뜸"}</Note>
      <Node at="left-[677px] top-[534.5px] flex h-[9px] w-[37.5px] items-center gap-[1.6px] whitespace-nowrap border border-l-2 border-[#d3c4f6] border-l-[#6a16f5] bg-white pl-[2px] text-[2.3px] leading-none text-[#6a16f5]">
        <Info className="h-[3px] w-[3px]" fill="#b79af8" /> Activation email sent!
      </Node>

      <Screen at="left-[375px] top-[574px]" page="employee" title="Employee Settings">
        <EmployeeTable cream />
      </Screen>
      <Node at="left-[597.5px] top-[582px] flex h-[121px] w-[7px] flex-col items-center gap-[2px] border-l border-[#e4e8f4] bg-[#fafbff] pt-[1px] text-[3px] leading-none text-[#6b87d1]">
        <span>‹</span>
        <span>›</span>
      </Node>
      <Note at="left-[414px] top-[651px] text-[2.5px]">{"Select box checked 상태\nIC color change\nfrom line checked"}</Note>
      <Chips at="left-[655px] top-[573.3px]" ids={["HR-132"]} />
      <Node at="left-[606.5px] top-[582px] h-[121px] w-[70px]">
        <Details
          title="Details"
          pitch="h-[10.95px]"
          rows={[
            ["First Name", "Harvey", "Last Name", "Oh"],
            ["Email Address", "Harveyoh@gmail.com"],
            ["Employee Type", "Full-time"],
            ["Department", "Product Management"],
            ["Job Title", "HR Manager"],
            ["Employee Start Date", "05/02/2020"],
            ["Is Supervisor?", "Yes", "Supervisor’s Name", "Anthony Kim"],
            ["Status", "Active", "Last Activity", "09/02/2023 12:49:50"],
          ]}
        >
          <div className="mb-[3.2px] mt-auto flex gap-[2px] text-[2.8px] leading-none">
            <span className="flex h-[6.6px] w-[30px] items-center justify-center bg-[#6b87d1] text-white">Edit</span>
            <span className="flex h-[6.6px] w-[30px] items-center justify-center border border-[#c4cef0] bg-white text-[#6b87d1]">Close</span>
          </div>
        </Details>
      </Node>
      <Note at="left-[593px] top-[715px] text-[2.5px] text-center">{"패널 접힌 상태일때\nDetail 숨김"}</Note>
      <Note at="left-[629px] top-[715px] text-[2.5px] text-center">{"패널 펼친 상태일때\nDetails 보여짐"}</Note>
      <Note at="left-[677px] top-[641px] text-[2.9px] text-center">{"Edit 버튼\n누르면\nedit화면\n이동"}</Note>
      <Chips at="left-[719.5px] top-[573.3px]" ids={["HR-115", "HR-116"]} />
      <Node at="left-[692.7px] top-[582px] h-[121px] w-[70px]">
        <EmployeeForm title="Edit" v={["Harvey", "Oh", "harveyoh@gmail.com", "Full time", "Product Management", "HR Manager", "05/02/2020", "Anthony Kim"]}>
          <div className="mb-[3.6px] mt-auto flex items-center text-[2.6px] leading-none">
            <span className="mr-[12px] flex h-[6px] w-[16.6px] items-center justify-center bg-[#ea7a70] text-[1.9px] text-[#8e2a22]">Deactivate</span>
            <span className="mr-[1.2px] flex h-[6.4px] w-[16px] items-center justify-center bg-[#6b87d1] text-white">Save</span>
            <span className="flex h-[6.4px] w-[16px] items-center justify-center border border-[#c4cef0] bg-white text-[#6b87d1]">Cancel</span>
          </div>
        </EmployeeForm>
      </Node>
      <Note at="left-[720px] top-[706.8px] text-[2.3px]">수정사항이 생기면 버튼 활성화 (Save enabled)</Note>
      <Note at="left-[681px] top-[712px] text-[2.4px]">{"Inactive의 경우 Deactivate 버튼이\nActivate로 변경되고 재활성화"}</Note>
      <Note at="left-[735px] top-[715.8px] text-[2.6px]">Deactivate버튼을 클릭했을 때</Note>

      <Note at="left-[789px] top-[569.3px] text-[2.3px]">Inactive 직원의 상태</Note>
      <Note at="left-[834px] top-[569.3px] text-[2.3px]">재활성화된 Employee</Note>
      <Node at="left-[789px] top-[573px] h-[121px] w-[69.6px]">
        <Details
          gray
          title="Details (Inactive user)"
          pitch="h-[10.95px]"
          rows={[
            ["First Name", "Harvey", "Last Name", "Oh"],
            ["Email Address", "harveyoh@gmail.com"],
            ["Employee Type", "Full-time"],
            ["Department", "Product Management"],
            ["Job Title", "HR Manager"],
            ["Employee Start Date", "05/02/2020", "Employee End Date", "10/04/2023"],
            ["Is Supervisor?", "Yes", "Supervisor’s Name", "Anthony Kim"],
            ["Status", "Inactive", "Last Activity Time", "10/04/2023 09:40:50"],
          ]}
        >
          <div className="mb-[3.6px] mt-auto flex items-center justify-between text-[2.6px] leading-none">
            <span className="flex h-[6.4px] w-[17px] items-center justify-center bg-[#2f7af5] text-[2.1px] text-white">Reactivate</span>
            <span className="flex h-[7px] w-[17px] items-center justify-center rounded-[1.5px] border border-[#b9c6ec] bg-white text-[#6b87d1]">Close</span>
          </div>
        </Details>
      </Node>
      <Note at="left-[764px] top-[677px] text-[2.1px]">{"Inactive 유저는\nReactivate 로 활성화"}</Note>
      <Note at="left-[823px] top-[695.5px] text-[2.3px]">{"1. 비활성화된 날짜로 표시되고\n2. 버튼은 Reactivate로 바뀜"}</Note>
      <div className="absolute left-[791.6px] top-[702px] flex h-[26.5px] w-[57.6px] flex-col rounded-[2px] border-l-[1.8px] border-[#eeb24a] bg-white px-[2px] pt-[1.6px] shadow-[0_0.4px_1.6px_#999]">
        <X className="ml-auto h-[2.6px] w-[2.6px] text-[#555]" />
        <div className="flex items-center gap-[2px] text-[2.8px] leading-none text-[#ee5b4c]">
          <Megaphone className="h-[4px] w-[4px] -scale-x-100" /> “Deactivate?!”
        </div>
        <Buttons small />
      </div>

      {/* email */}
      <Note at="left-[943px] top-[418.8px] text-[3.4px]">Activation 이메일 재전송</Note>
      <Chips at="left-[983.5px] top-[417.3px]" ids={["HR-114"]} />
      <Node at="left-[775.7px] top-[425.2px]">
        <GmailBoard />
      </Node>

      <Connectors />
    </main>
  );
}
